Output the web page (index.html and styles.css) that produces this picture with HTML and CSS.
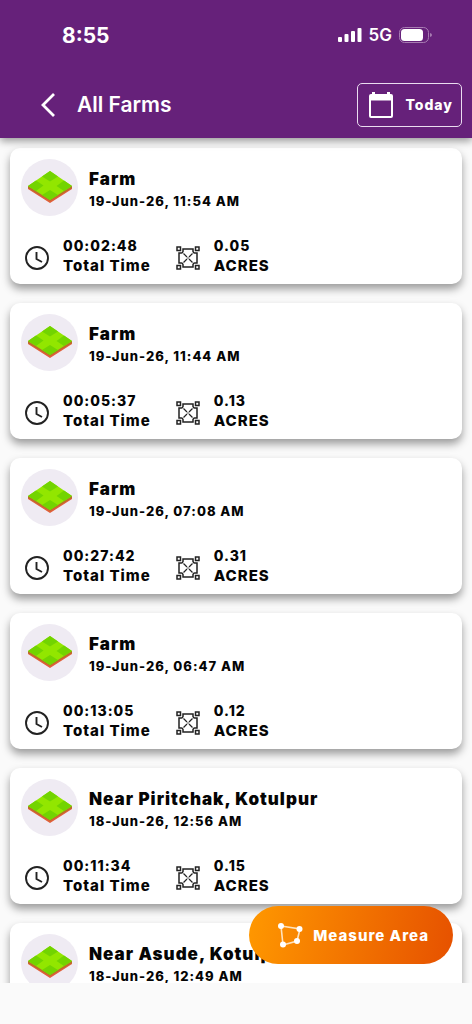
FILE: index.html
```html
<!DOCTYPE html>
<html lang="en">
<head>
<meta charset="utf-8">
<meta name="viewport" content="width=device-width, initial-scale=1">
<title>All Farms</title>
<link rel="stylesheet" href="styles.css">
</head>
<body>
<svg class="sprite" aria-hidden="true">
  <symbol id="field" viewBox="0 0 44 32">
    <path fill="#e0603a" d="M0 16v2l22 14 22-14v-2L22 29z"/>
    <path fill="#b5702a" d="M0 15v2l22 13 22-13v-2z"/>
    <path fill="#92e600" d="M22 0l22 15-22 14L0 15z"/>
    <path fill="#72d400" d="M22 0l8 5.500-8 5-8-5zM22 19l8 5-8 5-8-5zM8 9.500l7.500 5-7.500 5.500-8-5zM36 9.500l8 5.500-8 5-7.500-5z"/>
  </symbol>
  <symbol id="clock" viewBox="0 0 24 24">
    <g fill="none" stroke="#222" stroke-width="1.900"><circle cx="12" cy="12" r="11"/><path d="M11.500 6v7l5.500 3"/></g>
  </symbol>
  <symbol id="area" viewBox="0 0 24 24">
    <g fill="none" stroke="#222" stroke-width="1.500">
      <path d="M1 1h3.500v3.500H1zM19.500 1H23v3.500h-3.500zM1 19.500h3.500V23H1zM19.500 19.500H23V23h-3.500z"/>
      <path d="M7 3h10v2.500q.5 1.500 1.500 1.500H21v10h-2.500q-1 0-1.500 1.500V21H7v-2.500Q6.500 17 5.500 17H3V7h2.500Q6.500 7 7 5.500z"/>
      <path d="M7.500 7.500l3.500 3.500M16.500 7.500L13 11M7.500 16.500L11 13M16.500 16.500L13 13" stroke-width="1.200"/>
      <path d="M11 12h2M12 11v2" stroke="#888" stroke-width="1"/>
    </g>
  </symbol>
</svg>
<div class="app">
  <header class="header">
    <div class="status">
      <time class="status-time">8:55</time>
      <div class="status-icons">
        <svg width="24" height="16" viewBox="0 0 24 16" fill="#fff" aria-hidden="true"><rect y="10" width="4" height="5" rx="1"/><rect x="6.500" y="7" width="4" height="8" rx="1"/><rect x="13" y="4" width="4" height="11" rx="1"/><rect x="19.500" y="1" width="4" height="14" rx="1"/></svg>
        <span class="network">5G</span>
        <svg width="33" height="16" viewBox="0 0 33 16" aria-hidden="true"><rect x=".5" y=".5" width="29" height="15" rx="5" fill="none" stroke="#a77bb2"/><rect x="2" y="2" width="22" height="12" rx="3.500" fill="#fff"/><path d="M31 6v4q2-.5 2-2t-2-2" fill="#a77bb2"/></svg>
      </div>
    </div>
    <div class="toolbar">
      <button class="back" type="button" aria-label="Back"><svg width="16" height="24" viewBox="0 0 16 24" fill="none" stroke="#fff" stroke-width="2.800"><path d="M14 1L3 12l11 11"/></svg></button>
      <h1 class="title">All Farms</h1>
      <button class="today tracked" type="button"><svg width="26" height="28" viewBox="0 0 26 28" aria-hidden="true"><path fill="#fff" fill-rule="evenodd" d="M4 1h3v2h12V1h3v2h1q2 0 2 2v20q0 2-2 2H3q-2 0-2-2V5q0-2 2-2h1zM3 9.500v15.500h20V9.500z"/></svg><span>Today</span></button>
    </div>
  </header>
  <main class="list tracked" id="list"></main>
  <button class="measure tracked" type="button"><svg width="26" height="26" viewBox="0 0 26 26" aria-hidden="true"><g stroke="#ffe3bd" stroke-width="1.600" fill="none"><path d="M4 4l19 3-3 12-14 4z"/></g><g fill="#fff"><circle cx="4" cy="4" r="3"/><circle cx="22.500" cy="7" r="3"/><circle cx="20" cy="19" r="3"/><circle cx="6" cy="22.500" r="3"/></g></svg><span>Measure Area</span></button>
</div>
<script src="app.js"></script>
</body>
</html>
```
FILE: styles.css
```css
* { box-sizing: border-box; }
body { margin: 0; background: #fafafa; color: #050505; font-family: Inter, "Liberation Sans", sans-serif; }
button { border: 0; padding: 0; background: none; color: #fff; font: inherit; cursor: pointer; }
svg { display: block; flex: none; }
h1, h2, p { margin: 0; }
.sprite { position: absolute; width: 0; height: 0; }
.tracked, button.tracked { letter-spacing: 1px; }
.app { position: relative; display: flex; flex-direction: column; height: 100vh; padding-bottom: 41px; }
.header { position: relative; z-index: 1; flex: none; background: #66217a; color: #fff; box-shadow: 0 3px 8px rgba(0, 0, 0, .4); }
.status { display: flex; align-items: center; justify-content: space-between; height: 70px; padding: 0 40px 0 62px; }
.status-time { font-size: 21px; font-weight: 700; }
.status-icons { display: flex; align-items: center; gap: 7px; }
.network { font-size: 17px; font-weight: 600; }
.toolbar { display: flex; align-items: center; height: 68px; padding: 1px 10px 0 40px; }
.back { flex: none; margin-right: 21px; }
.title { flex: 1; font-size: 21px; font-weight: 600; letter-spacing: normal; }
.today { display: flex; align-items: center; gap: 11px; height: 44px; padding: 0 8px 0 10px; border: 1px solid #eadcf0; border-radius: 5px; font-size: 14px; font-weight: 800; }
.list { flex: 1; min-height: 0; display: flex; flex-direction: column; gap: 19px; padding: 10px 10px 0; overflow-y: auto; scrollbar-width: none; }
.card { flex: none; padding: 11px 11px 8px; border-radius: 10px; background: #fff; box-shadow: 0 5px 8px rgba(0, 0, 0, .38); }
.card-head { display: flex; align-items: center; gap: 11px; }
.card-text { padding-top: 2px; }
.avatar { display: grid; place-items: center; width: 57px; height: 57px; padding-bottom: 2px; border-radius: 50%; background: #efebf3; }
.name { font-size: 17px; line-height: 24px; font-weight: 900; }
.date { font-size: 13px; line-height: 20px; font-weight: 800; }
.stats { display: flex; gap: 25px; margin-top: 20px; padding-left: 4px; }
.stat { display: flex; align-items: center; gap: 14px; line-height: 20px; }
.stat svg { margin-top: 4px; }
.value { font-size: 14px; font-weight: 800; }
.label { font-size: 15px; font-weight: 800; }
.measure { position: absolute; right: 19px; bottom: 60px; z-index: 2; display: flex; align-items: center; gap: 10px; height: 58px; padding: 0 24px 0 28px; border-radius: 29px; background: linear-gradient(100deg, #ff9800, #e65100); font-size: 15px; font-weight: 800; }
```
FILE: app.js
```js
const farms = [
  ["Farm", "19-Jun-26, 11:54 AM", "00:02:48", "0.05"],
  ["Farm", "19-Jun-26, 11:44 AM", "00:05:37", "0.13"],
  ["Farm", "19-Jun-26, 07:08 AM", "00:27:42", "0.31"],
  ["Farm", "19-Jun-26, 06:47 AM", "00:13:05", "0.12"],
  ["Near Piritchak, Kotulpur", "18-Jun-26, 12:56 AM", "00:11:34", "0.15"],
  ["Near Asude, Kotulpur", "18-Jun-26, 12:49 AM", "", ""]
];

const stat = (icon, value, label) => `
  <div class="stat">
    <svg width="24" height="24" aria-hidden="true"><use href="#${icon}"/></svg>
    <div><p class="value">${value}</p><p class="label">${label}</p></div>
  </div>`;

document.getElementById("list").innerHTML = farms.map(([name, date, time, acres]) => `
  <article class="card">
    <div class="card-head">
      <div class="avatar"><svg width="44" height="32" aria-hidden="true"><use href="#field"/></svg></div>
      <div class="card-text"><h2 class="name">${name}</h2><p class="date">${date}</p></div>
    </div>
    ${time ? `<div class="stats">${stat("clock", time, "Total Time")}${stat("area", acres, "ACRES")}</div>` : ""}
  </article>`).join("");
```
